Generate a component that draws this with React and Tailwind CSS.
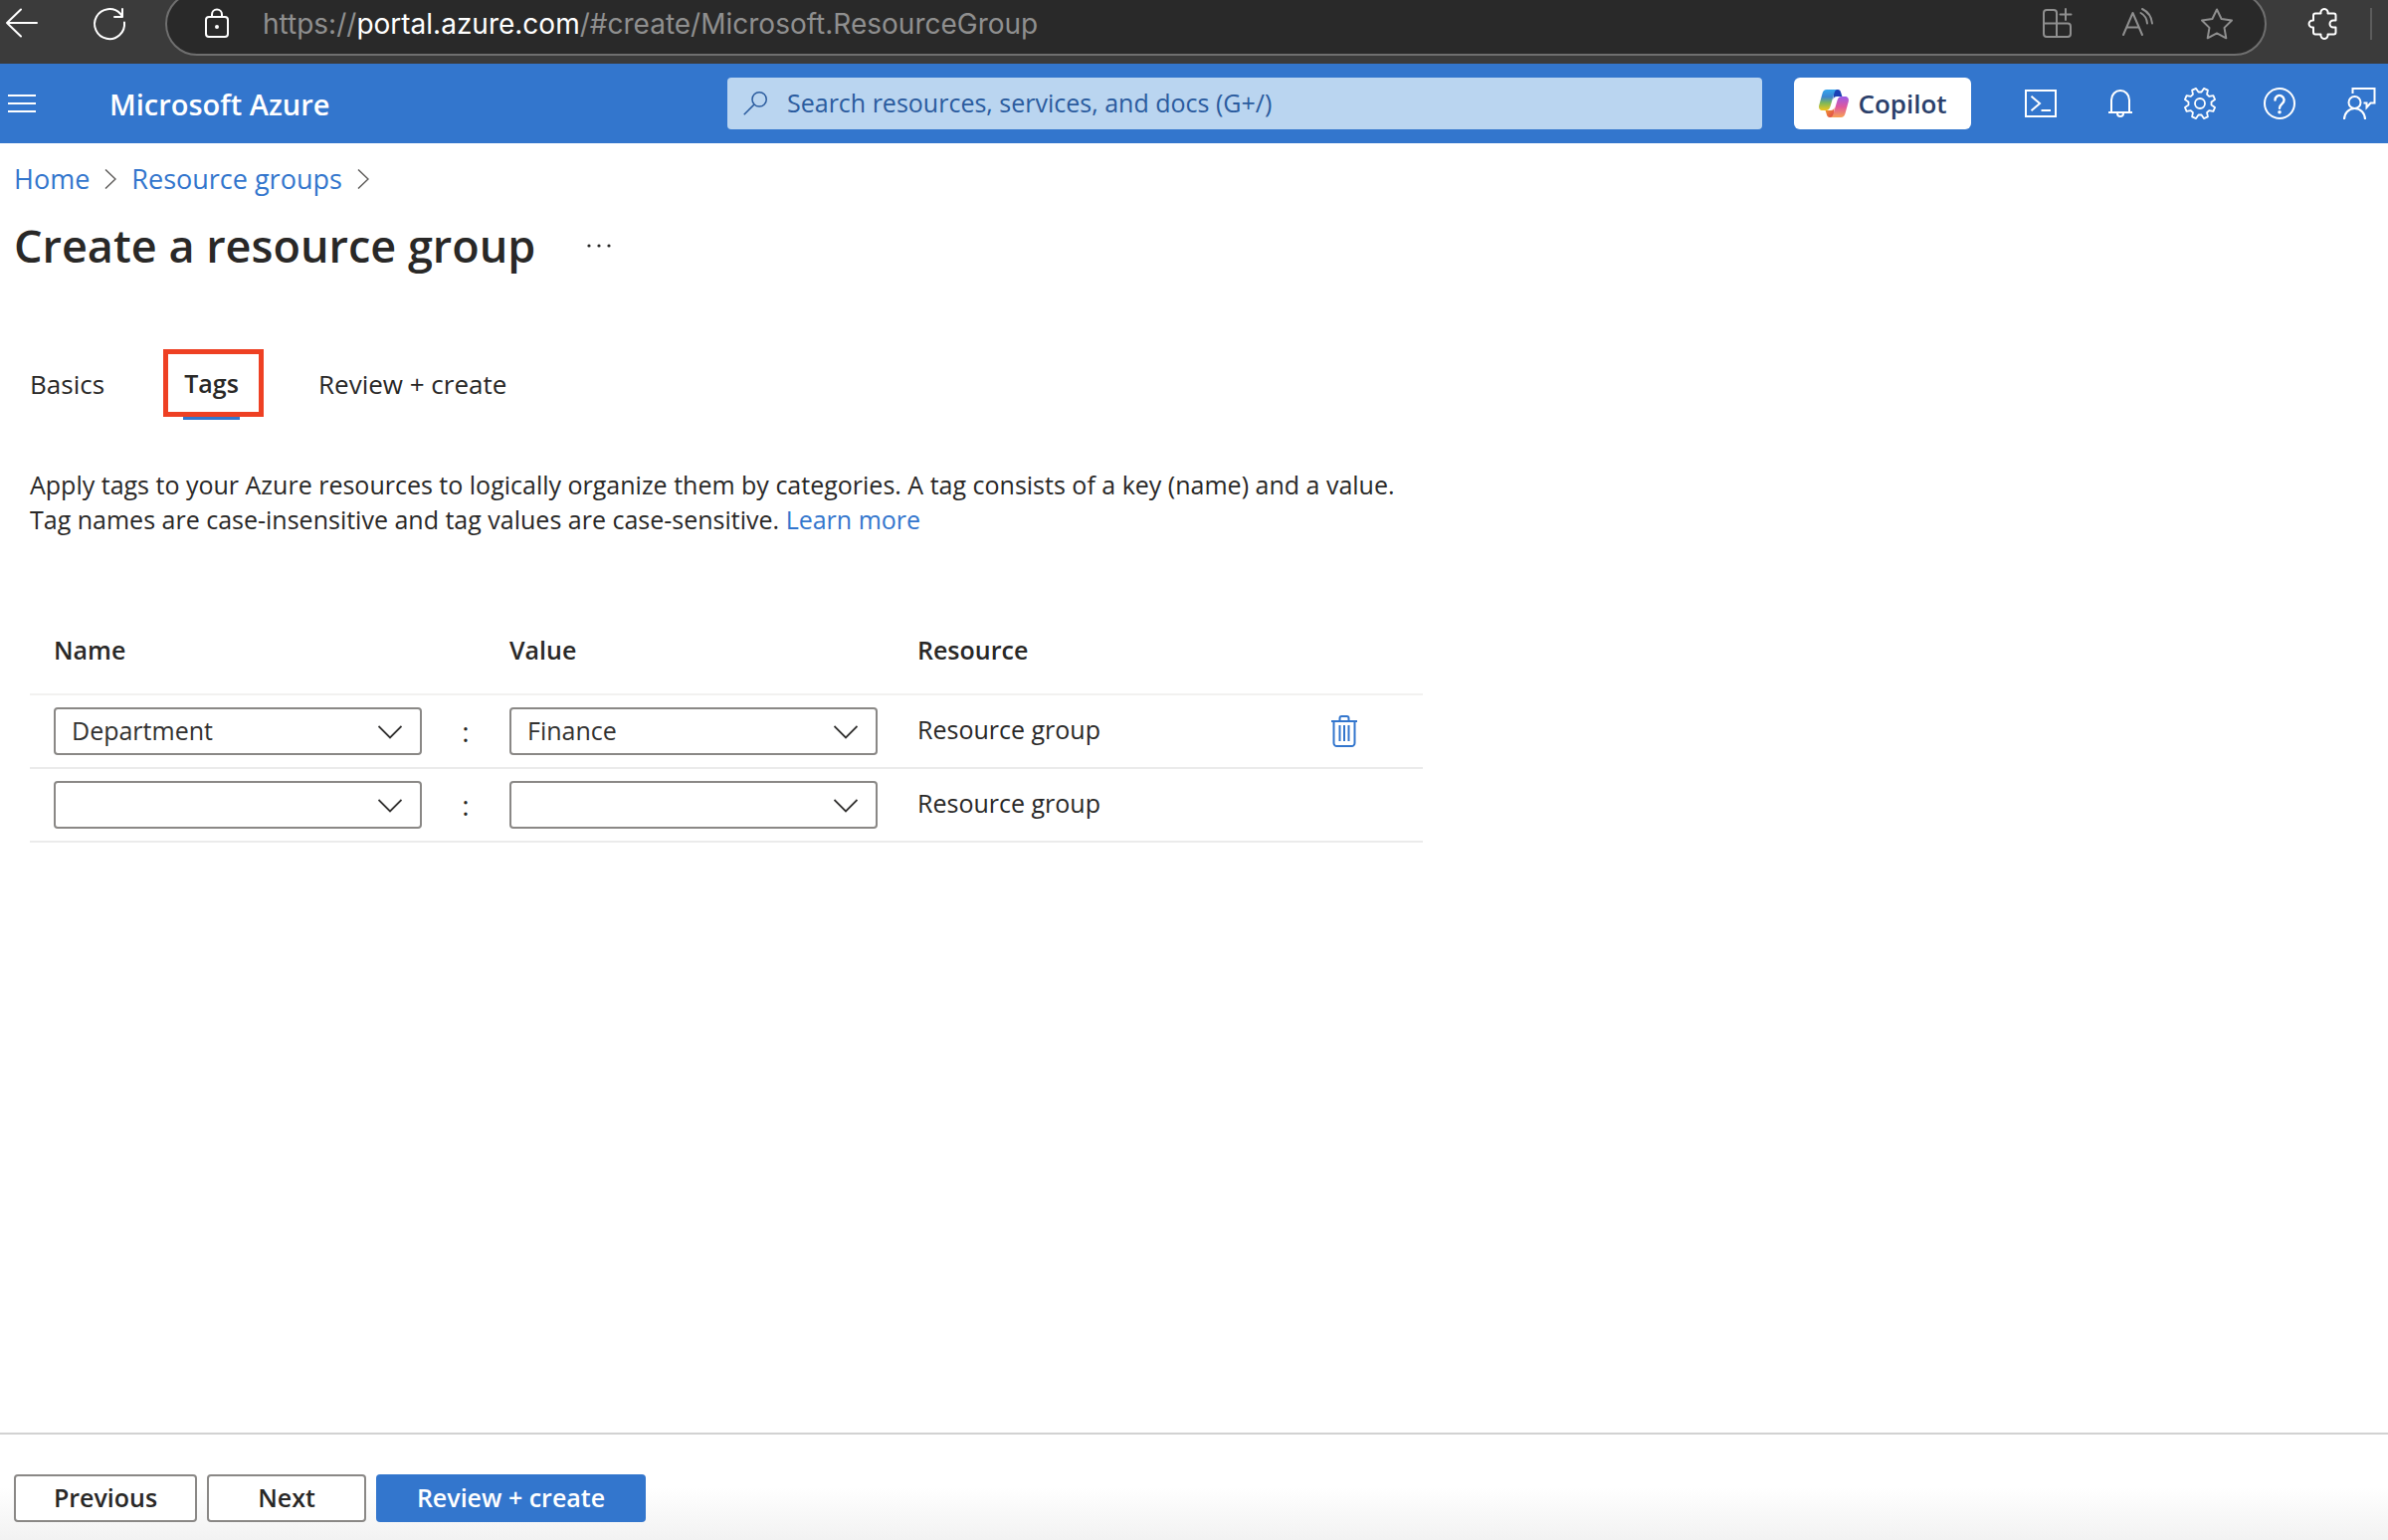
import { useState } from "react";

const INITIAL_TAGS = [
  { name: "Department", value: "Finance" },
  { name: "", value: "" },
];

const NAME_OPTIONS = ["", "Department", "Environment"];
const VALUE_OPTIONS = ["", "Finance", "Marketing"];

// Outline of a cog centred on 16,16 with a notch at the top
const gearOutline = () => {
  const point = (radius, degrees) => {
    const angle = (degrees * Math.PI) / 180;
    const x = 16 + radius * Math.sin(angle);
    const y = 16 - radius * Math.cos(angle);
    return `${x.toFixed(2)} ${y.toFixed(2)}`;
  };
  const points = [];
  for (let tooth = 0; tooth < 8; tooth++) {
    const center = tooth * 45 + 22.5;
    points.push(point(11.6, center - 15));
    points.push(point(15.6, center - 8));
    points.push(point(15.6, center + 8));
    points.push(point(11.6, center + 15));
  }
  return `M${points.join("L")}z`;
};

// Shared wrapper for the 32px line icons
const Icon = ({ children, strokeWidth = 2, className = "size-8" }) => (
  <svg
    viewBox="0 0 32 32"
    fill="none"
    stroke="currentColor"
    strokeWidth={strokeWidth}
    className={`${className} shrink-0 overflow-visible`}
    aria-hidden="true"
  >
    {children}
  </svg>
);

const BackIcon = () => (
  <Icon>
    <path d="M31 15H1M15 1.500L1 15l14 13.500" strokeLinecap="round" strokeLinejoin="round" />
  </Icon>
);

const ReloadIcon = () => (
  <Icon>
    <path d="M31 14.500A15 15 0 1 1 27 5.800l2 2.500" strokeLinecap="round" />
    <path d="M29 1v8h-8" strokeLinecap="round" strokeLinejoin="round" />
  </Icon>
);

const LockIcon = () => (
  <Icon>
    <rect x="7" y="9" width="22" height="20" rx="3" />
    <path d="M13 9V6.500a5 5 0 0 1 10 0V9" />
    <circle cx="18" cy="19" r="2" fill="currentColor" stroke="none" />
  </Icon>
);

const AppsIcon = () => (
  <Icon>
    <path d="M15 29H5a3 3 0 0 1-3-3V5a3 3 0 0 1 3-3h7a3 3 0 0 1 3 3v24zM2 15.500h24a3 3 0 0 1 3 3V26a3 3 0 0 1-3 3H15" />
    <path d="M24 1v11M18.500 6.500h11" strokeLinecap="round" />
  </Icon>
);

const ReadAloudIcon = () => (
  <Icon>
    <path d="M2 27L11.500 5 21 27M5.500 19.500h12" strokeLinecap="round" strokeLinejoin="round" />
    <path d="M19.500 5a13 13 0 0 1 6.500 10.500M21 1a18 18 0 0 1 10 14.500" strokeLinecap="round" />
  </Icon>
);

const StarIcon = () => (
  <Icon>
    <path
      d="M16 1.500l4.600 9.500 10.400 1.500-7.500 7.400 1.800 10.400-9.300-4.900-9.300 4.900 1.800-10.400L1 12.500l10.400-1.500z"
      strokeLinejoin="round"
    />
  </Icon>
);

const PuzzleIcon = () => (
  <Icon>
    <path
      d="M7 5.500h5.500a3.600 3.600 0 1 1 7 0h6a2 2 0 0 1 2 2v5H25a3.500 3.500 0 0 0 0 7h2.500v5a2 2 0 0 1-2 2h-6a3.600 3.600 0 1 1-7 0H7a2 2 0 0 1-2-2v-5a3.600 3.600 0 1 1 0-7v-5a2 2 0 0 1 2-2z"
      strokeLinejoin="round"
    />
  </Icon>
);

const MenuIcon = () => (
  <Icon>
    <path d="M2 8h28M2 16h28M2 24h28" />
  </Icon>
);

const SearchIcon = () => (
  <Icon className="size-6">
    <circle cx="21.500" cy="10.500" r="9.500" />
    <path d="M14.500 17.500L1 31" />
  </Icon>
);

const CloudShellIcon = () => (
  <Icon>
    <rect x="1" y="3" width="30" height="26" />
    <path d="M6.500 8.800l8.500 7.200-8.500 7.200M16.500 23h9.500" />
  </Icon>
);

const BellIcon = () => (
  <Icon>
    <path d="M4 25h24M7 25V12.500a9 9.500 0 0 1 18 0V25" />
    <path d="M13 26a3 3 0 0 0 6 0" />
  </Icon>
);

const GearIcon = () => (
  <Icon strokeWidth={1.800}>
    <path d={gearOutline()} strokeLinejoin="round" />
    <circle cx="16" cy="16" r="5" />
  </Icon>
);

const HelpIcon = () => (
  <Icon>
    <circle cx="16" cy="16" r="15" />
    <path d="M11.500 12.500a4.500 4.500 0 1 1 7.600 3.200c-1.700 1.500-3.100 2.500-3.100 5" strokeWidth="2.400" strokeLinecap="round" />
    <circle cx="16" cy="24.800" r="1.800" fill="currentColor" stroke="none" />
  </Icon>
);

const FeedbackIcon = () => (
  <Icon>
    <path d="M9.500 6V1H31.500v14.500H27.500l-4 4.500v-4.500H20.500" />
    <circle cx="11.500" cy="15" r="6" />
    <path d="M1 32c0-6 4.500-11 10.500-11S22 26 22 32" />
  </Icon>
);

const CopilotLogo = () => (
  <svg viewBox="0 0 30 28" className="h-7 w-8 shrink-0" aria-hidden="true">
    <defs>
      <linearGradient id="copilot-left" x1="0" y1="0" x2="0" y2="1">
        <stop offset="0" stopColor="#35a6ee" />
        <stop offset=".35" stopColor="#3d85cf" />
        <stop offset=".65" stopColor="#7fb857" />
        <stop offset="1" stopColor="#f3c51c" />
      </linearGradient>
      <linearGradient id="copilot-right" x1="0" y1="0" x2="0" y2="1">
        <stop offset="0" stopColor="#9a5be8" />
        <stop offset=".5" stopColor="#e0589c" />
        <stop offset="1" stopColor="#f7a254" />
      </linearGradient>
      <linearGradient id="copilot-bottom" x1="0" y1="0" x2="1" y2="1">
        <stop offset="0" stopColor="#f3a32b" />
        <stop offset="1" stopColor="#dd3f4e" />
      </linearGradient>
    </defs>
    <path d="M15 0h4c1.800 0 2.600 1 3 2.400L23.400 7H18c-2 0-3 1-3.500 3z" fill="#1c3fb4" />
    <path d="M15 28h-4c-1.800 0-2.600-1-3-2.400L6.600 21H12c2 0 3-1 3.500-3z" fill="url(#copilot-bottom)" />
    <path d="M8 0h11c-2 0-2.900 1.500-3.500 3.500L11.500 17c-.8 2.800-2 4-4.500 4H4c-3 0-4.500-2-3.800-5L3.500 4C4.200 1.500 5.500 0 8 0z" fill="url(#copilot-left)" />
    <path d="M22 28H11c2 0 2.900-1.500 3.500-3.500L18.500 11c.8-2.800 2-4 4.500-4h3c3 0 4.500 2 3.800 5l-3.300 12c-.7 2.500-2 4-4.500 4z" fill="url(#copilot-right)" />
  </svg>
);

const ChevronRight = () => (
  <svg viewBox="0 0 12 20" className="h-5 w-3 text-[#605e5c]" fill="none" stroke="currentColor" strokeWidth="1.500" aria-hidden="true">
    <path d="M1 .5L11 10 1 19.500" />
  </svg>
);

const TrashIcon = () => (
  <Icon>
    <path d="M3 6h26M11.500 6V3a2 2 0 0 1 2-2h5a2 2 0 0 1 2 2v3" />
    <path d="M5.500 6v22a3 3 0 0 0 3 3h15a3 3 0 0 0 3-3V6" />
    <path d="M11.500 10v16M16 10v16M20.500 10v16" />
  </Icon>
);

const IconButton = ({ label, children }) => (
  <button type="button" aria-label={label} className="flex h-20 w-20 items-center justify-center">
    {children}
  </button>
);

const BrowserBar = () => (
  <div className="flex h-16 items-start overflow-hidden bg-[#3b3b3b] pl-[6px] text-white">
    <button type="button" aria-label="Back" className="mt-2 mr-14">
      <BackIcon />
    </button>
    <button type="button" aria-label="Reload" className="mt-2 mr-10">
      <ReloadIcon />
    </button>
    <div className="-mt-2 flex h-16 flex-1 items-center rounded-full border-2 border-[#6f6f6f] bg-[#292929] pr-8 pl-8">
      <LockIcon />
      <div className="ml-8 flex-1 font-['Inter','Liberation_Sans',sans-serif] text-[28px] text-[#8f8f8f]">
        https://<span className="text-white">portal.azure.com</span>
        /#create/Microsoft.ResourceGroup
      </div>
      <div className="flex items-center gap-12 text-[#8f8f8f]">
        <button type="button" aria-label="Apps">
          <AppsIcon />
        </button>
        <button type="button" aria-label="Read aloud">
          <ReadAloudIcon />
        </button>
        <button type="button" aria-label="Add to favorites">
          <StarIcon />
        </button>
      </div>
    </div>
    <button type="button" aria-label="Extensions" className="mt-2 ml-[42px]">
      <PuzzleIcon />
    </button>
    <div className="mt-2 mr-4 ml-[30px] h-8 w-0.5 bg-[#5c5c5c]" />
  </div>
);

const AzureHeader = () => (
  <header className="flex h-20 items-center bg-[#3376cd] text-white">
    <button type="button" aria-label="Show portal menu" className="ml-[6px]">
      <MenuIcon />
    </button>
    <a href="#home" className="ml-[72px] w-[621px] pt-0.5 text-[29px] font-semibold">
      Microsoft Azure
    </a>
    <label className="flex h-[52px] flex-1 items-center gap-5 rounded bg-[#bad5f0] pl-4 text-[#2a5b9e]">
      <SearchIcon />
      <input
        type="text"
        aria-label="Search"
        placeholder="Search resources, services, and docs (G+/)"
        className="flex-1 bg-transparent text-[25px] outline-none placeholder:text-[#2a5b9e]"
      />
    </label>
    <button
      type="button"
      className="mr-[30px] ml-8 flex h-[52px] w-[178px] items-center justify-center gap-2 rounded-md bg-white text-[26px] font-semibold text-[#2b3f6b]"
    >
      <CopilotLogo />
      Copilot
    </button>
    <IconButton label="Cloud Shell">
      <CloudShellIcon />
    </IconButton>
    <IconButton label="Notifications">
      <BellIcon />
    </IconButton>
    <IconButton label="Settings">
      <GearIcon />
    </IconButton>
    <IconButton label="Help">
      <HelpIcon />
    </IconButton>
    <button type="button" aria-label="Feedback" className="mr-[13px] ml-6">
      <FeedbackIcon />
    </button>
  </header>
);

const TagSelect = ({ label, value, options, onChange }) => (
  <div className="relative w-[370px]">
    <select
      aria-label={label}
      value={value}
      onChange={e => onChange(e.target.value)}
      className="block h-12 w-full appearance-none rounded border-2 border-[#8a8886] bg-white px-4 text-[25px] text-[#323130]"
    >
      {options.map(option => (
        <option key={option} value={option}>
          {option}
        </option>
      ))}
    </select>
    <svg
      viewBox="0 0 24 14"
      className="pointer-events-none absolute top-[18px] right-5 h-[14px] w-6 text-[#323130]"
      fill="none"
      stroke="currentColor"
      strokeWidth="1.800"
      aria-hidden="true"
    >
      <path d="M.5 1L12 12.500 23.500 1" />
    </svg>
  </div>
);

const TagsTable = () => {
  const [tags, setTags] = useState(INITIAL_TAGS);

  const updateTag = (index, field, value) => {
    setTags(prev =>
      prev.map((tag, i) => (i === index ? { ...tag, [field]: value } : tag)),
    );
  };

  const removeTag = index => {
    setTags(prev => prev.filter((_, i) => i !== index));
  };

  return (
    <table className="mt-[66px] w-[1400px] table-fixed text-left text-[25px]">
      <thead>
        <tr className="h-[92px] border-b-2 border-[#f2f1f0]">
          <th className="w-[394px] pt-1 pl-6 font-semibold">Name</th>
          <th className="w-[88px]" />
          <th className="w-[410px] pt-1 font-semibold">Value</th>
          <th className="w-[408px] pt-1 font-semibold">Resource</th>
          <th />
        </tr>
      </thead>
      <tbody>
        {tags.map((tag, index) => (
          <tr key={index} className="h-[74px] border-b-2 border-[#ebebeb]">
            <td className="pl-6">
              <TagSelect
                label="Name"
                value={tag.name}
                options={NAME_OPTIONS}
                onChange={value => updateTag(index, "name", value)}
              />
            </td>
            <td className="text-center text-[28px]">:</td>
            <td>
              <TagSelect
                label="Value"
                value={tag.value}
                options={VALUE_OPTIONS}
                onChange={value => updateTag(index, "value", value)}
              />
            </td>
            <td className="pb-0.5">Resource group</td>
            <td>
              {tag.name && (
                <button
                  type="button"
                  aria-label="Delete tag"
                  className="ml-[5px] block text-[#3376cd]"
                  onClick={() => removeTag(index)}
                >
                  <TrashIcon />
                </button>
              )}
            </td>
          </tr>
        ))}
      </tbody>
    </table>
  );
};

const App = () => {
  return (
    <div className="flex min-h-screen flex-col bg-white font-['Open_Sans','Noto_Sans',sans-serif] text-[25px] text-[#292827]">
      <BrowserBar />
      <AzureHeader />

      <nav aria-label="Breadcrumb" className="flex h-[72px] items-center gap-[15px] pl-[14px] text-[27px] text-[#3376cd]">
        <a href="#home">Home</a>
        <ChevronRight />
        <a href="#groups">Resource groups</a>
        <ChevronRight />
      </nav>

      <div className="flex h-[62px] items-center pl-[14px]">
        <h1 className="text-[45px] font-semibold">Create a resource group</h1>
        <button type="button" aria-label="More" className="ml-[52px]">
          <svg viewBox="0 0 24 4" className="h-1 w-6" fill="currentColor" aria-hidden="true">
            <circle cx="2" cy="2" r="1.600" />
            <circle cx="12" cy="2" r="1.600" />
            <circle cx="22" cy="2" r="1.600" />
          </svg>
        </button>
      </div>

      <main className="pl-[30px]">
        <div role="tablist" className="mt-[73px] flex h-[70px] items-center text-[26px]">
          <button type="button" role="tab" aria-selected="false" className="w-[134px] text-left">
            Basics
          </button>
          <button
            type="button"
            role="tab"
            aria-selected="true"
            className="relative mr-[55px] h-[68px] w-[101px] self-start border-[5px] border-[#ee4023] pt-0.5 pr-1 text-[25px] font-semibold"
          >
            Tags
            <span className="absolute right-[19px] -bottom-2 left-[15px] h-[3px] bg-[#3376cd]" />
          </button>
          <button type="button" role="tab" aria-selected="false">
            Review + create
          </button>
        </div>

        <p className="mt-[49px] leading-[35px]">
          Apply tags to your Azure resources to logically organize them by
          categories. A tag consists of a key (name) and a value.
          <br />
          Tag names are case-insensitive and tag values are case-sensitive.{" "}
          <a href="#learn" className="text-[#3376cd]">
            Learn more
          </a>
        </p>

        <TagsTable />
      </main>

      <footer className="mt-auto flex h-[108px] gap-[10px] border-t-2 border-[#d2d2d2] bg-linear-to-b from-white from-50% to-[#f2f2f2] pt-10 pl-[14px] font-semibold">
        <button type="button" className="h-12 w-[184px] rounded border-2 border-[#8a8886] bg-white">
          Previous
        </button>
        <button type="button" className="h-12 w-40 rounded border-2 border-[#8a8886] bg-white">
          Next
        </button>
        <button type="button" className="h-12 w-[271px] rounded bg-[#3376cd] text-white">
          Review + create
        </button>
      </footer>
    </div>
  );
};

export default App;
